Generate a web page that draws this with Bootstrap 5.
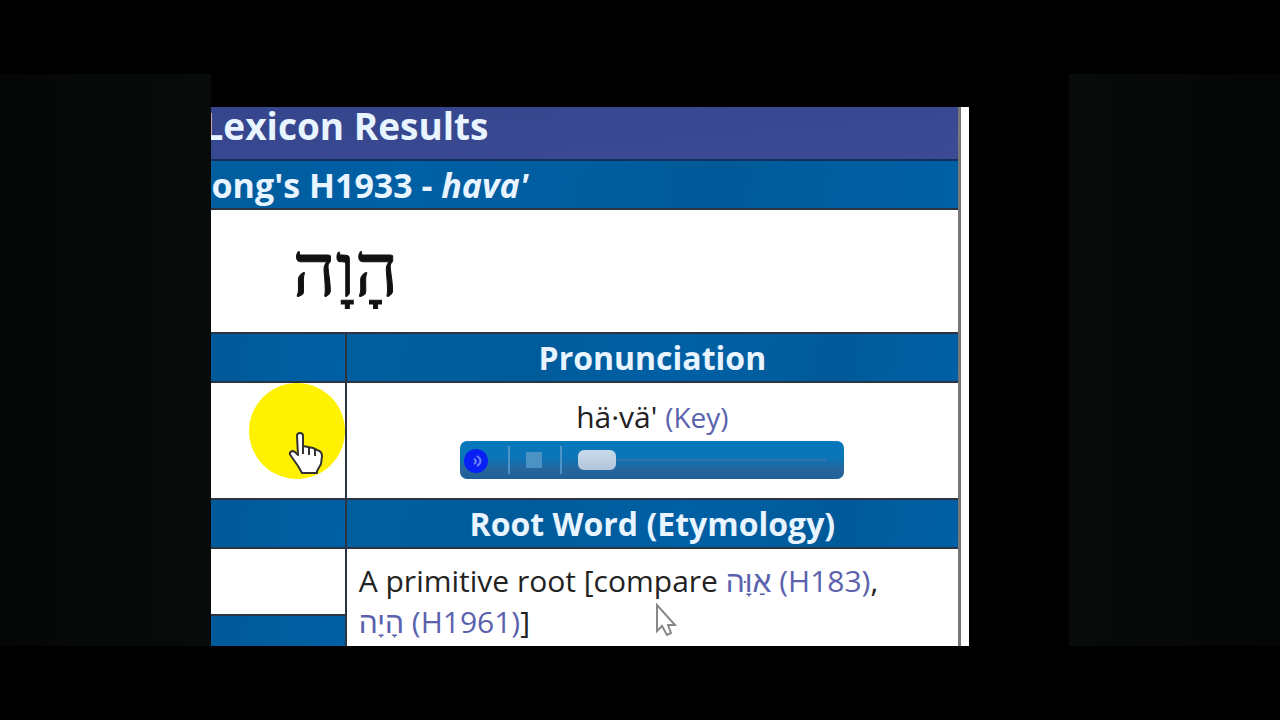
<!DOCTYPE html>
<html lang="en">
<head>
<meta charset="utf-8">
<meta name="viewport" content="width=device-width, initial-scale=1">
<title>Lexicon Results</title>
<link href="https://cdn.jsdelivr.net/npm/bootstrap@5.3.0/dist/css/bootstrap.min.css" rel="stylesheet">
<style>
  body { background: #000; font-family: "Open Sans", "Liberation Sans", sans-serif; color: #222; }
  .stage { display: grid; grid-template-columns: 211fr 858fr 211fr; padding: 74px 0; }
  .side-left { background: linear-gradient(to right, #050707, #070b0a); }
  .side-right { background: linear-gradient(to left, #050606, #070b0a); }
  .viewer { padding-top: 33px; padding-right: 100px; min-height: 0; }
  .sheet { background: #fff; padding-right: 8px; }
  .lexicon { width: 164%; flex: none; table-layout: fixed; border-collapse: collapse; line-height: 40px; font-size: 30px; font-weight: 500; }
  .lexicon th, .lexicon td { border: 2px solid #2b3440; padding: 0; }
  .lexicon th { height: 49px; color: #e8f4ff; background: #005c9f linear-gradient(100deg, #005f9f, #005b9a 30%, #0060a5 55%, #005a99 80%, #0060a5); text-align: center; font-weight: 700; font-size: 32px; line-height: 44px; white-space: nowrap; }
  .lexicon th.title { height: 53px; background: #374790 linear-gradient(175deg, #33448b, #3c4b94); border-color: #10305f; font-size: 37px; padding-bottom: 16px; line-height: 35px; border-top: 0; }
  .lexicon th.entry { border-top-color: #10305f; font-size: 34px; }
  .lexicon td.word { height: 124px; font-family: "Liberation Serif", serif; font-size: 75px; line-height: 100px; color: #111; -webkit-text-stroke: 1px #111; }
  .lexicon td.sound { height: 117px; }
  .lexicon td.blank { height: 67px; }
  .lexicon td.root { padding: 12px 12px; }
  .lexicon tr > :last-child { border-right: 3px solid #777; }
  .lexicon tr > :first-child:not([colspan]) { border-right: 2px solid #2b3440; }
  .lexicon a { color: #5b62ad; text-decoration: none; }
  .heb { font-family: "Liberation Sans", sans-serif; }
  .say { line-height: 40px; padding-top: 14px; }
  .say a { font-size: 28px; font-weight: 400; }
  .spot { width: 96px; height: 96px; right: 0; top: 0; }
  .player { width: 384px; height: 38px; border-radius: 7px; padding: 0 18px 0 2px; background: linear-gradient(#0877bb, #0b75b7 45%, #27659c 75%, #1d6098); }
  .play { width: 28px; height: 28px; border: 0; background: none; padding: 0; }
  .halt { width: 16px; height: 16px; border: 0; padding: 0; background: #4c93c4; }
  .rule { width: 2px; height: 28px; background: #4c94c5; margin: 0 16px 0 18px; }
  .seek { appearance: none; background: none; height: 22px; min-width: 0; }
  .seek::-webkit-slider-runnable-track { height: 2px; background: #3475a8; }
  .seek::-webkit-slider-thumb { appearance: none; width: 38px; height: 20px; margin-top: -9px; border-radius: 6px; background: linear-gradient(#c9dbea, #b1c4da); }
  .arrow { left: 308px; top: 54px; }
</style>
</head>
<body>
<main class="stage vh-100 overflow-hidden">
  <div class="side-left"></div>
  <section class="viewer bg-black overflow-hidden">
    <div class="sheet h-100 overflow-hidden">
    <div class="h-100 d-flex justify-content-end align-items-start overflow-hidden">
      <table class="lexicon">
        <tr><th colspan="2" class="title">Lexicon Results</th></tr>
        <tr><th colspan="2" class="entry">Strong's H1933 - <em>hava'</em></th></tr>
        <tr><td colspan="2" class="word text-center" lang="he" dir="rtl">הָוָה</td></tr>
        <tr><th></th><th>Pronunciation</th></tr>
        <tr>
          <td class="sound position-relative">
            <svg class="spot position-absolute" viewBox="0 0 96 96" aria-hidden="true">
              <circle cx="48" cy="48" r="48" fill="#fff200"/>
              <path d="M48 53c0-4 6-4 6 0v10l5 1 5 1 4 2c4 1 5 3 5 6l-1 8-4 7v2H53l-4-7-7-10c-3-4 1-6 4-4l3 3z" fill="#fff" stroke="#333" stroke-width="2" stroke-linejoin="round"/>
              <path d="M54 62v9m6-7v8m6-6v7" stroke="#333" stroke-width="2"/>
            </svg>
          </td>
          <td class="sound align-top">
            <div class="say text-center">hä·vä' <a href="#">(Key)</a></div>
            <div class="player d-flex align-items-center mx-auto mt-1">
              <button class="play" aria-label="Play">
                <svg class="d-block" width="28" height="28" viewBox="0 0 28 28"><circle cx="14" cy="15" r="12" fill="#0820f4"/><path d="M15 10q7 5 0 10M12 13q4 2 0 5" fill="none" stroke="#6d83f4" stroke-width="2"/></svg>
              </button>
              <span class="rule"></span>
              <button class="halt" aria-label="Stop"></button>
              <span class="rule"></span>
              <input class="seek flex-grow-1" type="range" value="0" aria-label="Position">
            </div>
          </td>
        </tr>
        <tr><th></th><th>Root Word (Etymology)</th></tr>
        <tr>
          <td class="blank"></td>
          <td class="root position-relative align-top" rowspan="2">A primitive root [compare <a href="#"><bdi class="heb" lang="he">אַוָּה</bdi> (H183)</a>,<br><a href="#"><bdi class="heb" lang="he">הָיָה</bdi> (H1961)</a>]
            <svg class="arrow position-absolute" width="24" height="36" viewBox="0 0 24 36" aria-hidden="true"><path d="M2 2v26l5-5 5 9 4-2-3-8h7z" fill="#fff" stroke="#888" stroke-width="2"/></svg>
          </td>
        </tr>
        <tr><th></th></tr>
      </table>
    </div>
    </div>
  </section>
  <div class="side-right"></div>
</main>
<script src="https://cdn.jsdelivr.net/npm/bootstrap@5.3.0/dist/js/bootstrap.bundle.min.js"></script>
</body>
</html>
